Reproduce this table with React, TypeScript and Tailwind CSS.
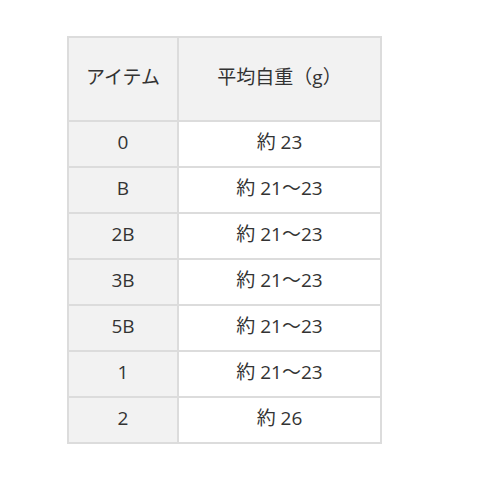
const rows = [
  { item: '0', weight: '約 23' },
  { item: 'B', weight: '約 21～23' },
  { item: '2B', weight: '約 21～23' },
  { item: '3B', weight: '約 21～23' },
  { item: '5B', weight: '約 21～23' },
  { item: '1', weight: '約 21～23' },
  { item: '2', weight: '約 26' },
];

export default function App() {
  return (
    <div
      className="w-[500px] h-[500px] bg-white pt-[36px] pl-[67px] text-[#333] text-[19px]"
      style={{ fontFamily: '"Open Sans", "Noto Sans CJK JP", sans-serif' }}
    >
      <table className="w-[315px] border-collapse border-2 border-[#dcdcdc]">
        <thead>
          <tr className="h-[84px] bg-[#f2f2f2]">
            <th className="w-[110px] border-2 border-[#dcdcdc] font-normal pb-[4px]">アイテム</th>
            <th className="border-2 border-[#dcdcdc] font-normal pb-[4px]">平均自重（g）</th>
          </tr>
        </thead>
        <tbody>
          {rows.map((r, i) => (
            <tr key={i} className="h-[46px]">
              <td className="border-2 border-[#dcdcdc] bg-[#f2f2f2] text-center pb-[3px]">{r.item}</td>
              <td className="border-2 border-[#dcdcdc] text-center pb-[3px]">{r.weight}</td>
            </tr>
          ))}
        </tbody>
      </table>
    </div>
  );
}
